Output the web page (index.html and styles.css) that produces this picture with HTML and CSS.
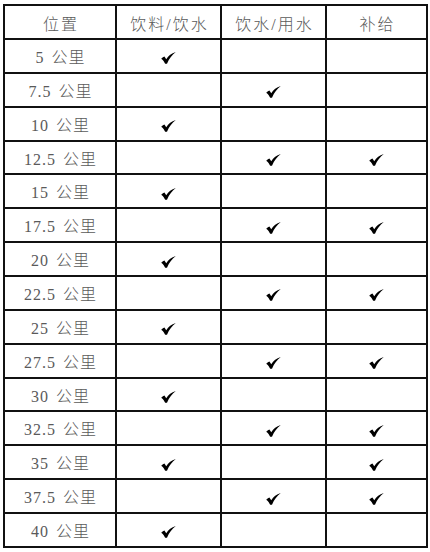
FILE: index.html
```html
<!DOCTYPE html>
<html lang="zh">
<head>
<meta charset="utf-8">
<link rel="stylesheet" href="styles.css">
</head>
<body>
<svg width="0" height="0" class="defs" aria-hidden="true">
  <symbol id="ck" viewBox="0 0 14 11">
    <path d="M0.2 6.1 C1.3 5.1 2.3 4.5 3.2 4.2 L4.9 6.6 C7 3.6 9.6 1.1 13.8 0 C10.5 2.6 7.6 6.3 5.6 10.8 L3.9 10.8 C3.1 9 1.9 7.4 0.2 6.1 Z"/>
  </symbol>
</svg>
<div class="grid">
  <div class="cell head">位置</div>
  <div class="cell head">饮料/饮水</div>
  <div class="cell head">饮水/用水</div>
  <div class="cell head">补给</div>

  <div class="cell lbl">5 公里</div>
  <div class="cell"><svg class="ck"><use href="#ck"/></svg></div>
  <div class="cell"></div>
  <div class="cell"></div>

  <div class="cell lbl">7.5 公里</div>
  <div class="cell"></div>
  <div class="cell"><svg class="ck"><use href="#ck"/></svg></div>
  <div class="cell"></div>

  <div class="cell lbl">10 公里</div>
  <div class="cell"><svg class="ck"><use href="#ck"/></svg></div>
  <div class="cell"></div>
  <div class="cell"></div>

  <div class="cell lbl">12.5 公里</div>
  <div class="cell"></div>
  <div class="cell"><svg class="ck"><use href="#ck"/></svg></div>
  <div class="cell"><svg class="ck"><use href="#ck"/></svg></div>

  <div class="cell lbl">15 公里</div>
  <div class="cell"><svg class="ck"><use href="#ck"/></svg></div>
  <div class="cell"></div>
  <div class="cell"></div>

  <div class="cell lbl">17.5 公里</div>
  <div class="cell"></div>
  <div class="cell"><svg class="ck"><use href="#ck"/></svg></div>
  <div class="cell"><svg class="ck"><use href="#ck"/></svg></div>

  <div class="cell lbl">20 公里</div>
  <div class="cell"><svg class="ck"><use href="#ck"/></svg></div>
  <div class="cell"></div>
  <div class="cell"></div>

  <div class="cell lbl">22.5 公里</div>
  <div class="cell"></div>
  <div class="cell"><svg class="ck"><use href="#ck"/></svg></div>
  <div class="cell"><svg class="ck"><use href="#ck"/></svg></div>

  <div class="cell lbl">25 公里</div>
  <div class="cell"><svg class="ck"><use href="#ck"/></svg></div>
  <div class="cell"></div>
  <div class="cell"></div>

  <div class="cell lbl">27.5 公里</div>
  <div class="cell"></div>
  <div class="cell"><svg class="ck"><use href="#ck"/></svg></div>
  <div class="cell"><svg class="ck"><use href="#ck"/></svg></div>

  <div class="cell lbl">30 公里</div>
  <div class="cell"><svg class="ck"><use href="#ck"/></svg></div>
  <div class="cell"></div>
  <div class="cell"></div>

  <div class="cell lbl">32.5 公里</div>
  <div class="cell"></div>
  <div class="cell"><svg class="ck"><use href="#ck"/></svg></div>
  <div class="cell"><svg class="ck"><use href="#ck"/></svg></div>

  <div class="cell lbl">35 公里</div>
  <div class="cell"><svg class="ck"><use href="#ck"/></svg></div>
  <div class="cell"></div>
  <div class="cell"><svg class="ck"><use href="#ck"/></svg></div>

  <div class="cell lbl">37.5 公里</div>
  <div class="cell"></div>
  <div class="cell"><svg class="ck"><use href="#ck"/></svg></div>
  <div class="cell"><svg class="ck"><use href="#ck"/></svg></div>

  <div class="cell lbl">40 公里</div>
  <div class="cell"><svg class="ck"><use href="#ck"/></svg></div>
  <div class="cell"></div>
  <div class="cell"></div>
</div>
</body>
</html>
```

FILE: styles.css
```css
html, body {
  margin: 0;
  padding: 0;
  background: #fff;
}

body {
  padding: 4px 0 0 3px;
  font-family: "Liberation Serif", "Noto Sans CJK SC", serif;
  color: #5a5a5a;
}

.defs {
  position: absolute;
  width: 0;
  height: 0;
}

.grid {
  display: grid;
  width: 425px;
  box-sizing: border-box;
  grid-template-columns: 110px 103px 103px 99px;
  grid-template-rows: 32px repeat(15, 31.87px);
  gap: 2px;
  padding: 2px;
  background: #111;
}

.cell {
  background: #fff;
  display: flex;
  align-items: center;
  justify-content: center;
  font-size: 16px;
  font-weight: 300;
  white-space: pre;
}

.head {
  letter-spacing: 2px;
  padding-left: 2px;
  padding-top: 1px;
}

.lbl {
  letter-spacing: 1px;
  word-spacing: 2px;
  padding-left: 1px;
}

.ck {
  width: 15px;
  height: 12px;
  fill: #000;
  margin-top: 5px;
}
```
